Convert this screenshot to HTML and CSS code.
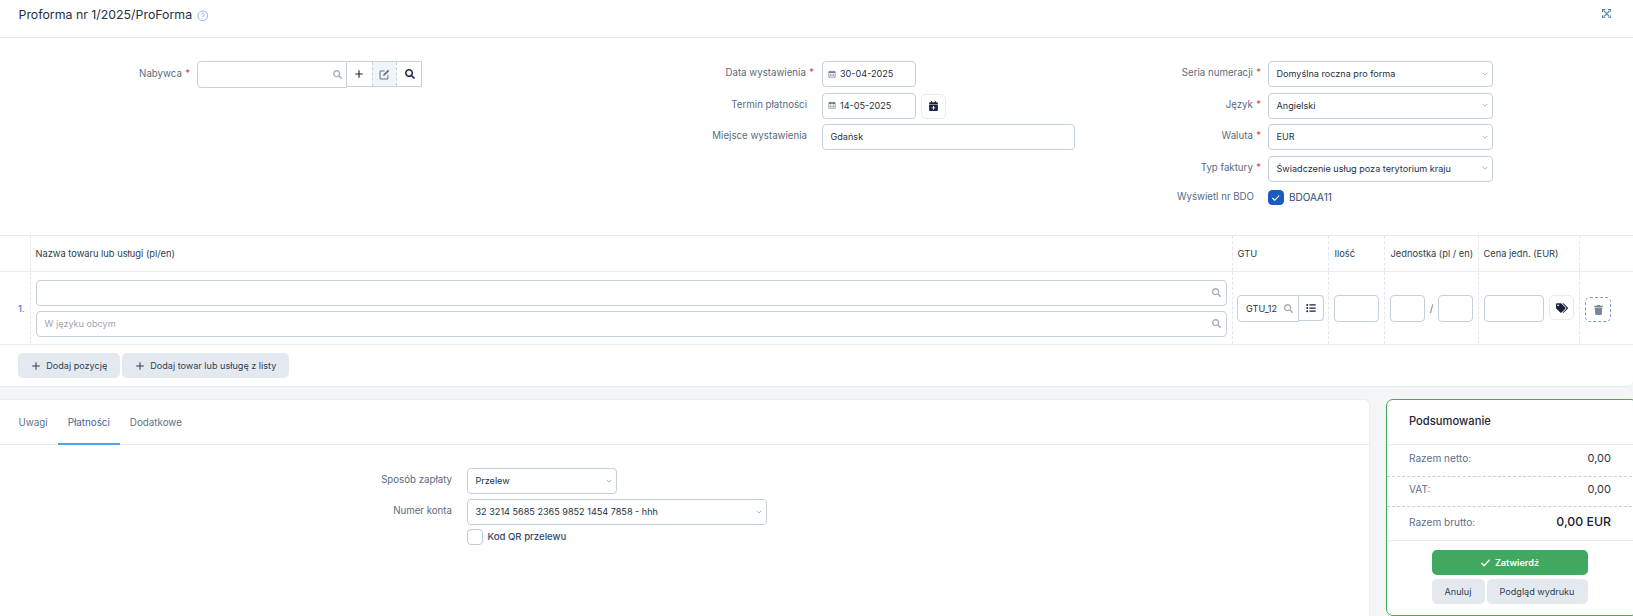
FILE: index.html
```html
<!DOCTYPE html>
<html lang="pl">
<head>
<meta charset="utf-8">
<title>Proforma</title>
<link rel="stylesheet" href="styles.css">
</head>
<body>
<svg class="defs" width="0" height="0" aria-hidden="true">
  <symbol id="i-search" viewBox="0 0 512 512"><path d="M505 442.7L405.3 343c-4.5-4.5-10.6-7-17-7H372c27.6-35.3 44-79.7 44-128C416 93.1 322.9 0 208 0S0 93.1 0 208s93.1 208 208 208c48.3 0 92.7-16.4 128-44v16.3c0 6.4 2.5 12.5 7 17l99.7 99.7c9.4 9.4 24.6 9.4 33.9 0l28.3-28.3c9.4-9.4 9.4-24.6.1-34zM208 336c-70.7 0-128-57.2-128-128 0-70.7 57.2-128 128-128 70.7 0 128 57.2 128 128 0 70.7-57.2 128-128 128z"/></symbol>
  <symbol id="i-tags" viewBox="0 0 640 512"><path d="M497.941 225.941L286.059 14.059A48 48 0 0 0 252.118 0H48C21.49 0 0 21.49 0 48v204.118a48 48 0 0 0 14.059 33.941l211.882 211.882c18.744 18.745 49.136 18.746 67.882 0l204.118-204.118c18.745-18.745 18.745-49.137 0-67.882zM112 160c-26.51 0-48-21.49-48-48s21.49-48 48-48 48 21.49 48 48-21.49 48-48 48zm513.941 133.823L421.823 497.941c-18.745 18.745-49.137 18.745-67.882 0l-.36-.36L527.64 323.522c16.999-16.999 26.36-39.6 26.36-63.64s-9.362-46.641-26.36-63.64L331.397 0h48.721a48 48 0 0 1 33.941 14.059l211.882 211.882c18.745 18.745 18.745 49.137 0 67.882z"/></symbol>
  <symbol id="i-trash" viewBox="0 0 448 512"><path d="M432 32H312l-9.4-18.7A24 24 0 0 0 281.1 0H166.8a23.72 23.72 0 0 0-21.4 13.3L136 32H16A16 16 0 0 0 0 48v32a16 16 0 0 0 16 16h416a16 16 0 0 0 16-16V48a16 16 0 0 0-16-16zM53.2 467a48 48 0 0 0 47.9 45h245.8a48 48 0 0 0 47.9-45L416 128H32z"/></symbol>
  <symbol id="i-cal" viewBox="0 0 16 16"><path d="M4 1h1.5v2H4zM10.500 1H12v2h-1.500zM2 2.500h12a1 1 0 0 1 1 1V14a1 1 0 0 1-1 1H2a1 1 0 0 1-1-1V3.500a1 1 0 0 1 1-1zM2.500 6v7.500h11V6z"/><path d="M4 7.500h2v1.500H4zM7 7.500h2v1.500H7zM10 7.500h2v1.500h-2zM4 10.500h2V12H4zM7 10.500h2V12H7zM10 10.500h2V12h-2z"/></symbol>
  <symbol id="i-calplus" viewBox="0 0 448 512"><path d="M96 32a32 32 0 0 1 64 0v32h128V32a32 32 0 0 1 64 0v32h48a48 48 0 0 1 48 48v48H0v-48a48 48 0 0 1 48-48h48zM0 192h448v272a48 48 0 0 1-48 48H48a48 48 0 0 1-48-48zm200 64v72h-72v48h72v72h48v-72h72v-48h-72v-72z"/></symbol>
  <symbol id="i-list" viewBox="0 0 16 16"><circle cx="2" cy="3" r="1.600"/><circle cx="2" cy="8" r="1.600"/><circle cx="2" cy="13" r="1.600"/><path d="M5.500 2h10v2h-10zM5.500 7h10v2h-10zM5.500 12h10v2h-10z"/></symbol>
</svg>

<header class="topbar">
  <h1 class="title">Proforma nr 1/2025/ProForma</h1>
  <svg class="help" viewBox="0 0 16 16"><circle cx="8" cy="8" r="6.800"/><path d="M6 6.300a2 2 0 1 1 3 1.800c-.7.400-1 .8-1 1.600"/><path d="M8 11.200v1.200"/></svg>
  <svg class="expand" viewBox="0 0 10 10"><path class="ex-corners" d="M0 0h3.500v1.300H1.300v2.200H0zM6.500 0H10v3.500H8.700V1.300H6.500zM0 6.500h1.300v2.200h2.200V10H0zM8.700 6.500H10V10H6.500V8.700h2.200z"/><path class="ex-cross" d="M2.200 2.200l5.600 5.600M7.800 2.200L2.200 7.800"/></svg>
</header>

<section class="form-area">
  <div class="col col-a">
    <div class="row">
      <label class="lab lab-a">Nabywca<span class="req">*</span></label>
      <div class="field f-buyer">
        <svg class="ic-in"><use href="#i-search"/></svg>
      </div>
      <div class="btn-strip">
        <span class="strip-btn"><svg class="ic-plus" viewBox="0 0 12 12"><path d="M6 1.500v9M1.500 6h9"/></svg></span>
        <span class="strip-btn active"><svg class="ic-edit" viewBox="0 0 16 16"><path d="M13 9v4.500a1 1 0 0 1-1 1H2.500a1 1 0 0 1-1-1V4a1 1 0 0 1 1-1H8"/><path d="M6.500 7.500L13 1l2 2-6.500 6.500-2.500.500z" class="fill"/></svg></span>
        <span class="strip-btn"><svg class="ic-dark"><use href="#i-search"/></svg></span>
      </div>
    </div>
  </div>

  <div class="col col-b">
    <div class="row">
      <label class="lab lab-b">Data wystawienia<span class="req">*</span></label>
      <div class="field f-date"><svg class="ic-cal"><use href="#i-cal"/></svg><span>30-04-2025</span></div>
    </div>
    <div class="row">
      <label class="lab lab-b plain">Termin płatności</label>
      <div class="field f-date"><svg class="ic-cal"><use href="#i-cal"/></svg><span>14-05-2025</span></div>
      <span class="icon-btn cal-btn"><svg class="ic-calplus"><use href="#i-calplus"/></svg></span>
    </div>
    <div class="row">
      <label class="lab lab-b plain">Miejsce wystawienia</label>
      <div class="field f-place"><span>Gdańsk</span></div>
    </div>
  </div>

  <div class="col col-c">
    <div class="row">
      <label class="lab lab-c">Seria numeracji<span class="req">*</span></label>
      <div class="field f-select"><span>Domyślna roczna pro forma</span><svg class="chev" viewBox="0 0 8 8"><path d="M1 2.500l3 3 3-3"/></svg></div>
    </div>
    <div class="row">
      <label class="lab lab-c">Język<span class="req">*</span></label>
      <div class="field f-select"><span>Angielski</span><svg class="chev" viewBox="0 0 8 8"><path d="M1 2.500l3 3 3-3"/></svg></div>
    </div>
    <div class="row">
      <label class="lab lab-c">Waluta<span class="req">*</span></label>
      <div class="field f-select"><span>EUR</span><svg class="chev" viewBox="0 0 8 8"><path d="M1 2.500l3 3 3-3"/></svg></div>
    </div>
    <div class="row">
      <label class="lab lab-c">Typ faktury<span class="req">*</span></label>
      <div class="field f-select"><span>Świadczenie usług poza terytorium kraju</span><svg class="chev" viewBox="0 0 8 8"><path d="M1 2.500l3 3 3-3"/></svg></div>
    </div>
    <div class="row row-check">
      <label class="lab lab-c plain">Wyświetl nr BDO</label>
      <span class="check on"><svg viewBox="0 0 16 16"><path d="M4 8.300l2.800 2.700L12 5.500"/></svg></span>
      <span class="check-text">BDOAA11</span>
    </div>
  </div>
</section>

<section class="items">
  <div class="grid head">
    <div class="cell"></div>
    <div class="cell">Nazwa towaru lub usługi (pl/en)</div>
    <div class="cell">GTU</div>
    <div class="cell">Ilość</div>
    <div class="cell">Jednostka (pl / en)</div>
    <div class="cell">Cena jedn. (EUR)</div>
    <div class="cell"></div>
  </div>
  <div class="grid body">
    <div class="cell num">1.</div>
    <div class="cell names">
      <div class="field wide"><svg class="ic-in"><use href="#i-search"/></svg></div>
      <div class="field wide"><span class="ph">W języku obcym</span><svg class="ic-in"><use href="#i-search"/></svg></div>
    </div>
    <div class="cell inline gtu-cell">
      <div class="field f-gtu"><span>GTU_12</span><svg class="ic-in"><use href="#i-search"/></svg></div>
      <span class="gtu-btn"><svg class="ic-list"><use href="#i-list"/></svg></span>
    </div>
    <div class="cell inline"><div class="field f-qty"></div></div>
    <div class="cell inline">
      <div class="field f-unit"></div><span class="slash">/</span><div class="field f-unit"></div>
    </div>
    <div class="cell inline">
      <div class="field f-price"></div>
      <span class="icon-btn tag-btn"><svg class="ic-tags"><use href="#i-tags"/></svg></span>
    </div>
    <div class="cell inline">
      <span class="trash-btn"><svg class="ic-trash"><use href="#i-trash"/></svg></span>
    </div>
  </div>
  <div class="add-row">
    <button class="btn gray"><svg class="ic-addplus" viewBox="0 0 12 12"><path d="M6 1.500v9M1.500 6h9"/></svg>Dodaj pozycję</button>
    <button class="btn gray"><svg class="ic-addplus" viewBox="0 0 12 12"><path d="M6 1.500v9M1.500 6h9"/></svg>Dodaj towar lub usługę z listy</button>
  </div>
</section>

<main class="lower">
  <section class="tabs-card">
    <nav class="tabs">
      <a class="tab">Uwagi</a>
      <a class="tab current">Płatności</a>
      <a class="tab">Dodatkowe</a>
    </nav>
    <div class="pay">
      <div class="row">
        <label class="lab lab-p">Sposób zapłaty</label>
        <div class="field f-pay"><span>Przelew</span><svg class="chev" viewBox="0 0 8 8"><path d="M1 2.500l3 3 3-3"/></svg></div>
      </div>
      <div class="row">
        <label class="lab lab-p">Numer konta</label>
        <div class="field f-acct"><span>32 3214 5685 2365 9852 1454 7858 - hhh</span><svg class="chev" viewBox="0 0 8 8"><path d="M1 2.500l3 3 3-3"/></svg></div>
      </div>
      <div class="row row-qr">
        <span class="lab lab-p"></span>
        <span class="check"></span>
        <span class="check-text">Kod QR przelewu</span>
      </div>
    </div>
  </section>

  <aside class="summary">
    <h2 class="sum-title">Podsumowanie</h2>
    <div class="sum-line"><span>Razem netto:</span><b>0,00</b></div>
    <div class="sum-line dashed"><span>VAT:</span><b>0,00</b></div>
    <div class="sum-line total"><span>Razem brutto:</span><b>0,00 EUR</b></div>
    <div class="sum-actions">
      <button class="btn green"><svg class="ic-ok" viewBox="0 0 12 12"><path d="M1.500 6.500L4.500 9.500 10.500 3"/></svg>Zatwierdź</button>
      <div class="sum-pair">
        <button class="btn gray cancel">Anuluj</button>
        <button class="btn gray preview">Podgląd wydruku</button>
      </div>
    </div>
  </aside>
</main>
</body>
</html>
```
FILE: styles.css
```css
* { box-sizing: border-box; }
html, body { margin: 0; height: 616px; overflow: hidden; }
body {
  background: #f4f5f7;
  font-family: Inter, "Liberation Sans", sans-serif;
  font-size: 11px;
  color: #1f2a3c;
}
.defs { position: absolute; }

.topbar {
  height: 38px;
  background: #fff;
  border-bottom: 1px solid #e9ebf1;
  display: flex;
  align-items: flex-start;
  padding: 6px 22px 0 18.500px;
}
.title { margin: 0; font-size: 12.350px; line-height: 18px; font-weight: 400; color: #1f3044; }
.help { width: 11.500px; height: 11.500px; margin: 3.500px 0 0 4.500px; fill: none; stroke: #7fa8ec; stroke-width: 1.200; }
.expand { width: 9.500px; height: 9.500px; margin: 2.500px 0 0 auto; }
.ex-corners { fill: #4f7ba6; }
.ex-cross { fill: none; stroke: #6d8fb0; stroke-width: 1.400; }

.form-area {
  height: 197px;
  background: #fff;
  display: flex;
  padding-top: 23px;
}
.col { display: flex; flex-direction: column; gap: 5.500px; }
.col-a { width: 660px; }
.col-b { width: 440px; }
.col-c { flex: 1; }
.row { display: flex; align-items: flex-start; }
.lab {
  flex: none;
  text-align: right;
  color: #5a6b80;
  font-size: 9.700px;
  line-height: 14px;
  padding-top: 5px;
  margin-right: 8px;
}
.lab.plain { padding-right: 7px; }
.lab-a { width: 190px; padding-top: 6px; margin-right: 7px; }
.lab-b { width: 154px; }
.lab-c { width: 161px; margin-right: 7px; }
.req { color: #d9434e; margin-left: 3.300px; }

.field {
  height: 26px;
  flex: none;
  display: flex;
  align-items: center;
  background: #fff;
  border: 1px solid #c5d0dc;
  border-radius: 4px;
  padding: 0 4.500px 1px 7.500px;
  font-size: 9.100px;
  color: #26323f;
  position: relative;
}
.f-buyer { width: 150px; height: 27px; justify-content: flex-end; padding-right: 4px; padding-bottom: 0; border-radius: 4px 0 0 4px; }
.f-date { width: 94px; padding-left: 4.500px; }
.f-date span { margin-left: 4.500px; }
.f-place { width: 253px; }
.f-select { width: 225px; justify-content: space-between; }
.f-pay { width: 150px; justify-content: space-between; }
.f-acct { width: 300px; justify-content: space-between; }
.wide { width: 1191px; justify-content: space-between; padding-right: 5px; }
.wide .ic-in { margin-left: auto; }
.f-gtu { width: 62px; border-radius: 4px 0 0 4px; height: 27px; justify-content: space-between; padding: 0 5px 0 8px; }
.f-qty { width: 45px; height: 27px; }
.f-unit { width: 35px; height: 27px; }
.f-price { width: 60px; height: 27px; }
.ph { color: #9ba5b3; }

.ic-in { width: 9px; height: 9px; fill: #a7afba; flex: none; }
.ic-dark { width: 10px; height: 10px; margin-left: 1px; fill: #1d2c45; }
.ic-cal { width: 8px; height: 8px; fill: #6f7e91; flex: none; }
.chev { width: 6px; height: 6px; fill: none; stroke: #9aa5b1; stroke-width: 1.100; flex: none; }

.btn-strip {
  display: flex;
  height: 26px;
  border: 1px solid #c5d0dc;
  border-left: 0;
}
.strip-btn { width: 24.670px; display: flex; align-items: center; justify-content: center; }
.strip-btn + .strip-btn { border-left: 1px dashed #c5d0dc; }
.strip-btn.active { background: #f1f5f9; }
.ic-plus { width: 10px; height: 10px; fill: none; stroke: #1d2c45; stroke-width: 1.400; }
.ic-edit { width: 11px; height: 11px; fill: none; stroke: #5f7389; stroke-width: 1.500; }
.ic-edit .fill { fill: #5f7389; stroke: none; }

.icon-btn {
  width: 25px;
  height: 25px;
  display: flex;
  align-items: center;
  justify-content: center;
  background: #fff;
  border: 1px solid #e7ebf0;
  border-radius: 5px;
  flex: none;
}
.cal-btn { margin: 1px 0 0 4.500px; }
.ic-calplus { width: 9px; height: 10px; fill: #16243d; }

.row-check { margin-top: 3px; align-items: center; height: 15px; }
.row-check .lab { padding: 0 7px 2px 0; }
.check {
  width: 15.500px;
  height: 15.500px;
  flex: none;
  border: 1px solid #bfcad7;
  border-radius: 4px;
  background: #fff;
  display: flex;
}
.check.on { background: #1a5bc3; border-color: #1a5bc3; }
.check svg { fill: none; stroke: #fff; stroke-width: 1.400; width: 100%; height: 100%; }
.check-text { margin-left: 5.500px; font-size: 10px; color: #2f4b6e; padding-bottom: 2px; }

.items { background: #fff; border-bottom: 1px solid #e9ebf1; border-radius: 0 0 6px 0; }
.grid { display: grid; grid-template-columns: 31px 1202px 96px 56px 94px 101px 53px; }
.head { height: 37px; border-top: 1px solid #e9ebf1; border-bottom: 1px solid #e9ebf1; }
.body { height: 73px; border-bottom: 1px solid #e9ebf1; }
.cell { border-right: 1px dashed #e2e6ee; min-width: 0; }
.cell:last-child { border-right: 0; }
.head .cell { display: flex; align-items: center; font-size: 9.300px; color: #2e3b4e; padding-left: 4.500px; }
.head .cell:nth-child(4), .head .cell:nth-child(5) { padding-left: 5.500px; }
.num { color: #3f7fd0; font-size: 9.500px; font-weight: 500; display: flex; align-items: center; padding-left: 18px; }
.names { display: flex; flex-direction: column; gap: 5px; padding: 8px 0 0 5px; }
.inline { display: flex; align-items: flex-start; padding-top: 23px; padding-left: 5px; }
.gtu-cell { padding-left: 4px; }
.gtu-btn {
  width: 25px;
  height: 26px;
  display: flex;
  align-items: center;
  justify-content: center;
  border: 1px solid #c5d0dc;
  border-left: 0;
  border-radius: 0 4px 4px 0;
}
.ic-list { width: 10px; height: 10px; fill: #15233b; }
.slash { width: 13px; text-align: center; line-height: 27px; color: #5a6b80; font-size: 10px; }
.tag-btn { margin-left: 5px; }
.ic-tags { width: 12px; height: 10px; fill: #15233b; }
.trash-btn {
  width: 26px;
  height: 25px;
  margin-top: 2px;
  display: flex;
  align-items: center;
  justify-content: center;
  border: 1px dashed #7f9ab8;
  border-radius: 5px;
}
.ic-trash { width: 9px; height: 10px; fill: #76879c; }

.add-row { height: 41px; display: flex; gap: 2px; padding: 8px 0 0 18px; }
.btn {
  height: 25px;
  border: 0;
  border-radius: 5px;
  font: inherit;
  font-size: 9.100px;
  display: flex;
  align-items: center;
  justify-content: center;
  padding: 0;
}
.gray { background: #e4e9f0; color: #2f4155; }
.add-row .btn:first-child { width: 102px; }
.add-row .btn:last-child { width: 167px; }
.ic-addplus { width: 10px; height: 10px; margin-right: 5.500px; fill: none; stroke: #2a3b50; stroke-width: 1.200; }

.lower { display: flex; gap: 16px; padding-top: 12px; height: 229px; }
.tabs-card {
  width: 1370px;
  flex: none;
  background: #fff;
  border: 1px solid #ebedf2;
  border-width: 1px 1px 0 0;
  border-radius: 0 6px 0 0;
}
.tabs { height: 45px; display: flex; border-bottom: 1px solid #e9ebf1; padding-left: 8.500px; }
.tab { padding: 0 10px; line-height: 45px; font-size: 9.800px; color: #62728a; height: 45px; }
.tab.current { color: #4a5f9c; border-bottom: 2px solid #4aa3ef; }
.pay { display: flex; flex-direction: column; gap: 5px; padding: 23px 0 0 349px; }
.row-qr { margin-top: -1px; align-items: center; }
.row-qr .lab { height: 15px; padding: 0; }
.row-qr .check-text { margin-left: 5px; font-size: 9.600px; font-weight: 500; padding-bottom: 0; }
.lab-p { width: 103px; margin-right: 15px; }

.summary {
  flex: none;
  width: 252px;
  background: #fff;
  border: 1.500px solid #41a85f;
  border-radius: 7px;
  height: 217px;
}
.sum-title { margin: 0; height: 45px; line-height: 43px; padding-left: 22px; font-size: 11.200px; font-weight: 500; color: #1c2436; border-bottom: 1px solid #e9ebf1; }
.sum-line { height: 31px; display: flex; justify-content: space-between; align-items: center; padding: 0 26px 5px 22px; font-size: 10.100px; color: #5d6f8b; }
.sum-line b { font-weight: 400; font-size: 11px; color: #2c3442; }
.dashed { border-top: 1px dashed #c5d0dc; border-bottom: 1px dashed #c5d0dc; }
.total { height: 34px; padding-bottom: 4px; border-bottom: 1px solid #e9ebf1; }
.total b { font-size: 12.300px; font-weight: 500; color: #1a2230; }
.sum-actions { padding: 8.500px 0 0 44.500px; width: 201px; display: flex; flex-direction: column; gap: 4px; }
.green { background: #41a85f; color: #fff; font-weight: 600; font-size: 9.100px; width: 156px; }
.ic-ok { width: 11px; height: 11px; margin-right: 4px; fill: none; stroke: #fff; stroke-width: 1.500; }
.sum-pair { display: flex; gap: 2px; }
.cancel { width: 53px; }
.preview { width: 101px; }
```
